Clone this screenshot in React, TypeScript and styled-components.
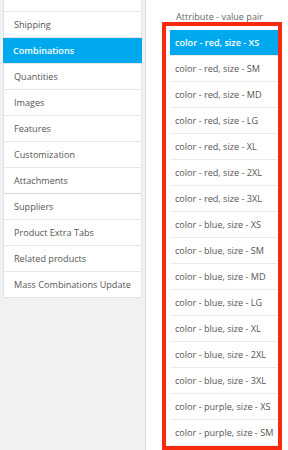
import React from 'react';
import styled, { createGlobalStyle } from 'styled-components';

const GlobalStyle = createGlobalStyle`
    html, body {
        margin: 0;
        padding: 0;
        background: #eff1f2;
        font-family: "Open Sans", "Liberation Sans", sans-serif;
    }
`;

const Page = styled.div`
    display: flex;
    width: 288px;
    height: 450px;
    overflow: hidden;
    background: #eff1f2;
`;

const Sidebar = styled.div`
    width: 145px;
    padding-left: 3px;
    box-sizing: border-box;
    flex-shrink: 0;
`;

const Nav = styled.ul`
    list-style: none;
    margin: 0;
    padding: 0;
    width: 139px;
    background: #fff;
    border-left: 1px solid #e4e4e4;
    border-right: 1px solid #e4e4e4;
    box-sizing: border-box;
`;

const NavItem = styled.li<{ $active?: boolean; $height?: number; $strong?: boolean }>`
    height: ${(p) => p.$height ?? 26}px;
    box-sizing: border-box;
    display: flex;
    align-items: center;
    padding-left: 10px;
    font-size: 9.1px;
    color: ${(p) => (p.$active ? '#fff' : '#555')};
    font-weight: ${(p) => (p.$active ? 600 : 400)};
    background: ${(p) => (p.$active ? '#00a8ee' : '#fff')};
    border-bottom: 1px solid ${(p) => (p.$strong ? '#d6d6d6' : '#e6e6e6')};
    margin-left: ${(p) => (p.$active ? '-1px' : '0')};
    margin-right: ${(p) => (p.$active ? '-1px' : '0')};
    white-space: nowrap;
`;

const Panel = styled.div`
    flex: 1;
    background: #fff;
    border-left: 1px solid #dcdcdc;
    padding-left: 16px;
    box-sizing: border-box;
`;

const Header = styled.div`
    height: 22px;
    padding: 11px 0 0 14px;
    box-sizing: border-box;
    font-size: 9.1px;
    line-height: 12px;
    color: #666;
    white-space: nowrap;
`;

const Highlight = styled.div`
    width: 120px;
    border: 4px solid #f7290f;
    padding: 4px 0 0 4px;
    box-sizing: border-box;
    overflow: hidden;
`;

const Row = styled.div<{ $selected?: boolean }>`
    height: 26px;
    box-sizing: border-box;
    display: flex;
    align-items: center;
    padding-left: 5px;
    font-size: 9.1px;
    white-space: nowrap;
    color: ${(p) => (p.$selected ? '#fff' : '#555')};
    font-weight: ${(p) => (p.$selected ? 600 : 400)};
    background: ${(p) => (p.$selected ? '#00a8ee' : '#fff')};
    border-bottom: 1px solid #ebebeb;
`;

const tabs = [
    'Shipping',
    'Combinations',
    'Quantities',
    'Images',
    'Features',
    'Customization',
    'Attachments',
    'Suppliers',
    'Product Extra Tabs',
    'Related products',
    'Mass Combinations Update',
];

const sizes = ['XS', 'SM', 'MD', 'LG', 'XL', '2XL', '3XL'];
const combos = [
    ...sizes.map((s) => `color - red, size - ${s}`),
    ...sizes.map((s) => `color - blue, size - ${s}`),
    'color - purple, size - XS',
    'color - purple, size - SM',
];

const App: React.FC = () => {
    return (
        <>
            <GlobalStyle />
            <Page>
                <Sidebar>
                    <Nav>
                        <NavItem $height={12} />
                        {tabs.map((t) => (
                            <NavItem
                                key={t}
                                $active={t === 'Combinations'}
                                $strong={t === 'Attachments'}
                            >
                                {t}
                            </NavItem>
                        ))}
                    </Nav>
                </Sidebar>
                <Panel>
                    <Header>Attribute - value pair</Header>
                    <Highlight>
                        {combos.map((c, i) => (
                            <Row key={c} $selected={i === 0}>
                                {c}
                            </Row>
                        ))}
                    </Highlight>
                </Panel>
            </Page>
        </>
    );
};

export default App;
